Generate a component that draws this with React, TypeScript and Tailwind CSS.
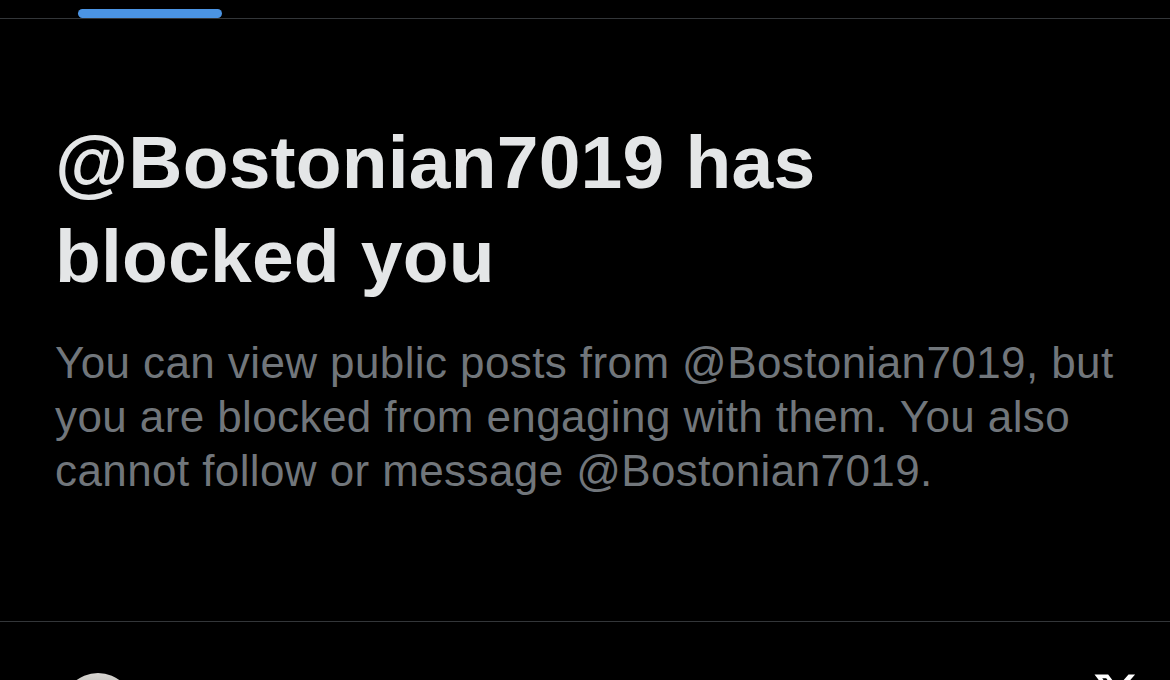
const handle = "@Bostonian7019";

function XLogo({ className }: { className?: string }) {
  return (
    <svg viewBox="0 0 24 24" className={className} fill="currentColor" aria-hidden="true">
      <path d="M18.244 2.25h3.308l-7.227 8.26 8.502 11.24H16.17l-5.214-6.817L4.99 21.75H1.68l7.73-8.835L1.254 2.25H8.08l4.713 6.231zm-1.161 17.52h1.833L7.084 4.126H5.117z" />
    </svg>
  );
}

export default function App() {
  return (
    <main className="h-[680px] w-full overflow-hidden bg-black font-['Liberation_Sans',Arial,sans-serif]">
      <div className="h-[19px] border-b border-[#333639] pt-[9px]">
        <div className="ml-[78px] h-[9px] w-[144px] rounded-full bg-[#4b94e3]" />
      </div>

      <section className="h-[603px] border-b border-[#333639] px-[55px] pt-[96px]">
        <h1 className="text-[75px] font-bold leading-[94px] tracking-[0.2px] text-[#e4e6e7]">
          {handle} has
          <br />
          blocked you
        </h1>
        <p className="mt-[33px] text-[44px] leading-[54px] tracking-[0.4px] text-[#71767b]">
          You can view public posts from {handle}, but
          <br />
          you are blocked from engaging with them. You also
          <br />
          cannot follow or message {handle}.
        </p>
      </section>

      <div className="flex items-start gap-[50px] pl-[62px] pr-[30px] pt-[51px]">
        <div className="h-[72px] w-[72px] shrink-0 rounded-full bg-gradient-to-b from-[#d8d6d2] to-[#6d6a66]" />
        <div className="flex flex-1 items-baseline gap-3 pt-[4px] text-[38px] leading-none text-white">
          <span className="font-bold">Bostonian</span>
          <span className="text-[#e7e9ea]">{handle} · 1d</span>
        </div>
        <XLogo className="-mt-[3px] h-[48px] w-[48px] shrink-0 text-white" />
      </div>
    </main>
  );
}
